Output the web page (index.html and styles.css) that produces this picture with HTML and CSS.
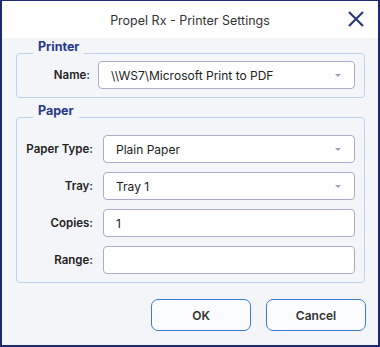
FILE: index.html
```html
<!DOCTYPE html>
<html>
<head>
<meta charset="utf-8">
<link rel="stylesheet" href="styles.css">
</head>
<body>
<div class="window">
  <div class="titlebar">
    <div class="title">Propel Rx - Printer Settings</div>
    <button class="close" aria-label="Close">
      <svg width="16" height="16" viewBox="0 0 16 16"><path d="M1 1 L15 15 M15 1 L1 15" stroke="#2b3c7c" stroke-width="2.2" fill="none"/></svg>
    </button>
  </div>
  <div class="content">
    <div class="group">
      <div class="legend">Printer</div>
      <div class="box printer">
        <div class="row">
          <label class="lbl">Name:</label>
          <div class="field select"><span>\\WS7\Microsoft Print to PDF</span><i class="arrow"></i></div>
        </div>
      </div>
    </div>
    <div class="group">
      <div class="legend">Paper</div>
      <div class="box paper">
        <div class="row">
          <label class="lbl">Paper Type:</label>
          <div class="field select"><span>Plain Paper</span><i class="arrow"></i></div>
        </div>
        <div class="row">
          <label class="lbl">Tray:</label>
          <div class="field select"><span>Tray 1</span><i class="arrow"></i></div>
        </div>
        <div class="row">
          <label class="lbl">Copies:</label>
          <div class="field"><span>1</span></div>
        </div>
        <div class="row">
          <label class="lbl">Range:</label>
          <div class="field"><span></span></div>
        </div>
      </div>
    </div>
    <div class="buttons">
      <button class="btn">OK</button>
      <button class="btn">Cancel</button>
    </div>
  </div>
</div>
</body>
</html>
```
FILE: styles.css
```css
* { box-sizing: border-box; }
html, body { margin: 0; padding: 0; }
body {
  font-family: Inter, "Noto Sans", sans-serif;
  font-size: 12px;
  color: #222;
}
.window {
  width: 380px;
  height: 347px;
  border: 2px solid #1b2a72;
  border-top-width: 1px;
  background: #f4f5f8;
  display: flex;
  flex-direction: column;
}
.titlebar {
  height: 37px;
  background: #fff;
  display: flex;
  align-items: center;
  justify-content: center;
  position: relative;
}
.title {
  font-size: 12.5px;
  color: #333;
  padding-top: 1px;
}
.close {
  position: absolute;
  right: 14px;
  top: 10px;
  width: 16px;
  height: 16px;
  padding: 0;
  border: 0;
  background: none;
  display: flex;
}
.content {
  padding: 1px 13px 0 14px;
  display: flex;
  flex-direction: column;
}
.group {
  display: flex;
  flex-direction: column;
  align-items: flex-start;
}
.group + .group { margin-top: 5px; }
.legend {
  margin-left: 17px;
  padding: 0 5px;
  line-height: 16px;
  font-size: 12.5px;
  font-weight: 700;
  color: #27398a;
  background: #f4f5f8;
  position: relative;
  z-index: 1;
}
.box {
  align-self: stretch;
  margin-top: -2px;
  border: 1px solid #bdd1ec;
  border-radius: 4px;
  display: flex;
  flex-direction: column;
  gap: 9px;
  padding-right: 9px;
}
.printer { padding-top: 7px; padding-bottom: 8px; }
.paper { padding-top: 17px; padding-bottom: 8px; }
.row {
  display: flex;
  align-items: center;
}
.lbl {
  text-align: right;
  font-weight: 600;
  color: #222;
  font-size: 11.5px;
}
.printer .lbl { width: 73px; margin-right: 8px; }
.paper .lbl { width: 76px; margin-right: 10px; }
.field {
  flex: 1;
  height: 28px;
  background: #fff;
  border: 1px solid #a9aec8;
  border-radius: 4px;
  display: flex;
  align-items: center;
  padding: 0 12px;
  font-size: 12px;
  color: #222;
}
.field span { flex: 1; }
.arrow {
  width: 0;
  height: 0;
  border-left: 3px solid transparent;
  border-right: 3px solid transparent;
  border-top: 3px solid #9aa0ba;
  margin-right: 1px;
}
.buttons {
  margin-top: 16px;
  display: flex;
  justify-content: flex-end;
  gap: 15px;
  margin-right: -1px;
}
.btn {
  width: 100px;
  height: 32px;
  border: 1.5px solid #3a7bd5;
  border-radius: 7px;
  background: #fbfcfe;
  font-family: inherit;
  font-size: 12px;
  font-weight: 600;
  color: #333;
}
```
